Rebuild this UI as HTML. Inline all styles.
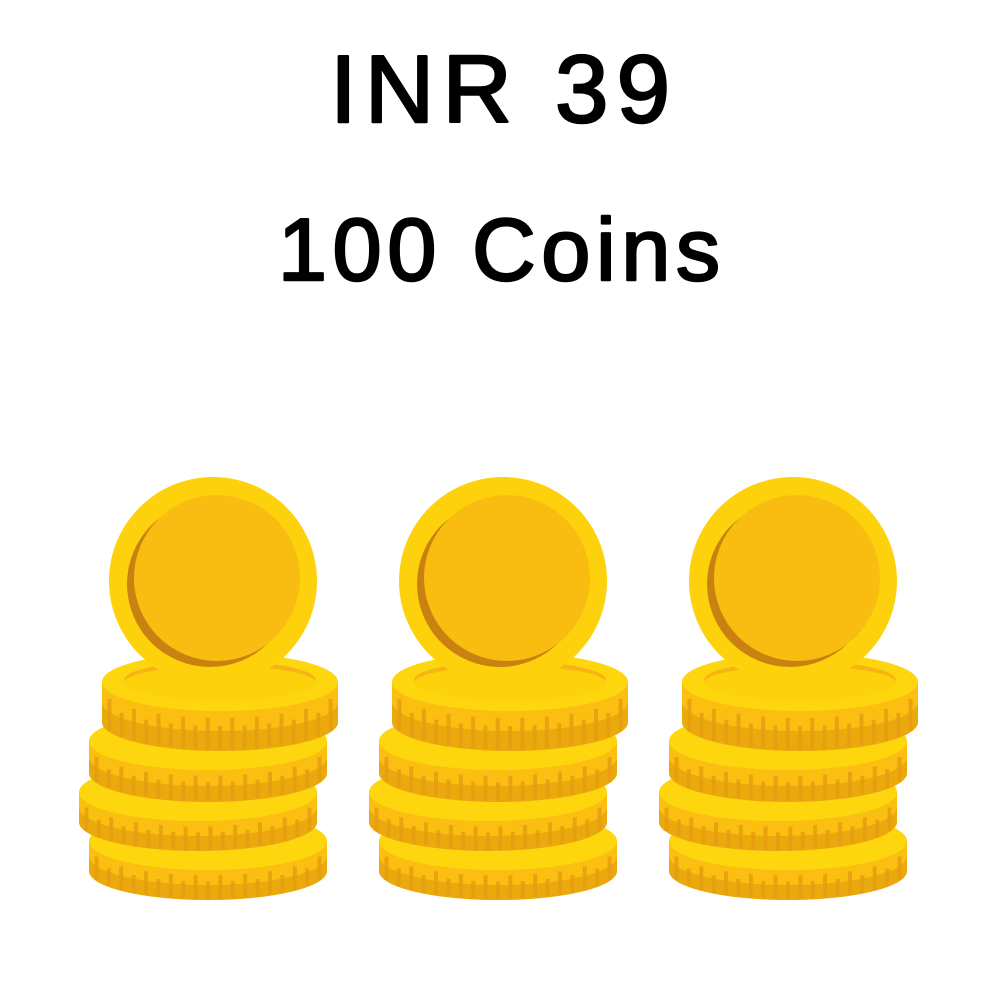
<!DOCTYPE html>
<html><head><meta charset="utf-8"><style>
html,body{margin:0;padding:0;background:#fff;width:1000px;height:1000px;overflow:hidden}
svg{display:block}
</style></head><body>
<svg id="s" width="1000" height="1000" viewBox="0 0 1000 1000" xmlns="http://www.w3.org/2000/svg">
<text x="500" y="122" text-anchor="middle" font-family="Liberation Sans, sans-serif" font-size="96" textLength="340" lengthAdjust="spacing" fill="#000" stroke="#000" stroke-width="2.5" stroke-linejoin="round">INR 39</text>
<text x="499" y="280" text-anchor="middle" font-family="Liberation Sans, sans-serif" font-size="88" textLength="442" lengthAdjust="spacing" fill="#000" stroke="#000" stroke-width="2.5" stroke-linejoin="round">100 Coins</text>
<g id="g"></g>
</svg>
<script>
var g=document.getElementById('g'),h='';
function coin(cx,cy,rx,ry,t,top){
  var s='';
  s+='<path d="M'+(cx-rx)+','+cy+' L'+(cx-rx)+','+(cy+t)+' A'+rx+' '+ry+' 0 0 0 '+(cx+rx)+','+(cy+t)+' L'+(cx+rx)+','+cy+' Z" fill="#FBBF11"/>';
  var m=cy+t*0.5;
  s+='<path d="M'+(cx-rx)+','+m+' L'+(cx-rx)+','+(cy+t)+' A'+rx+' '+ry+' 0 0 0 '+(cx+rx)+','+(cy+t)+' L'+(cx+rx)+','+m+' A'+rx+' '+ry+' 0 0 1 '+(cx-rx)+','+m+' Z" fill="#EAAA0E"/>';
  for(var i=-9;i<=9;i++){
    var dx=i*rx/9.6,f=Math.sqrt(1-(dx/rx)*(dx/rx)),y=cy+ry*f;
    var len=(i%2?t*0.85:t*0.65);
    s+='<rect x="'+(cx+dx-2)+'" y="'+(y+t-len+1)+'" width="4" height="'+(len-2)+'" fill="#E69E10" opacity="0.85"/>';
  }
  s+='<ellipse cx="'+cx+'" cy="'+cy+'" rx="'+rx+'" ry="'+ry+'" fill="#FDD60E"/>';
  if(top){s+='<ellipse cx="'+cx+'" cy="'+(cy-2)+'" rx="'+(rx-22)+'" ry="'+(ry-10)+'" fill="#F7B414"/><ellipse cx="'+cx+'" cy="'+(cy+1)+'" rx="'+(rx-22)+'" ry="'+(ry-12)+'" fill="#FDD20C"/>';}
  return s;
}
function stack(o){
  var s='';
  s+=coin(208+o,841,119,29,30,false);
  s+=coin(198+o,792,119,29,30,false);
  s+=coin(208+o,741,119,29,32,false);
  s+=coin(220+o,682,118,29,40,true);
  s+='<circle cx="'+(213+o)+'" cy="581" r="104" fill="#FDD20C"/>';
  s+='<circle cx="'+(210+o)+'" cy="584" r="83" fill="#C9820F"/>';
  s+='<circle cx="'+(217+o)+'" cy="578" r="83" fill="#F9BD12"/>';
  return s;
}
h=stack(0)+stack(290)+stack(580);
g.innerHTML=h;
</script>
</body></html>
